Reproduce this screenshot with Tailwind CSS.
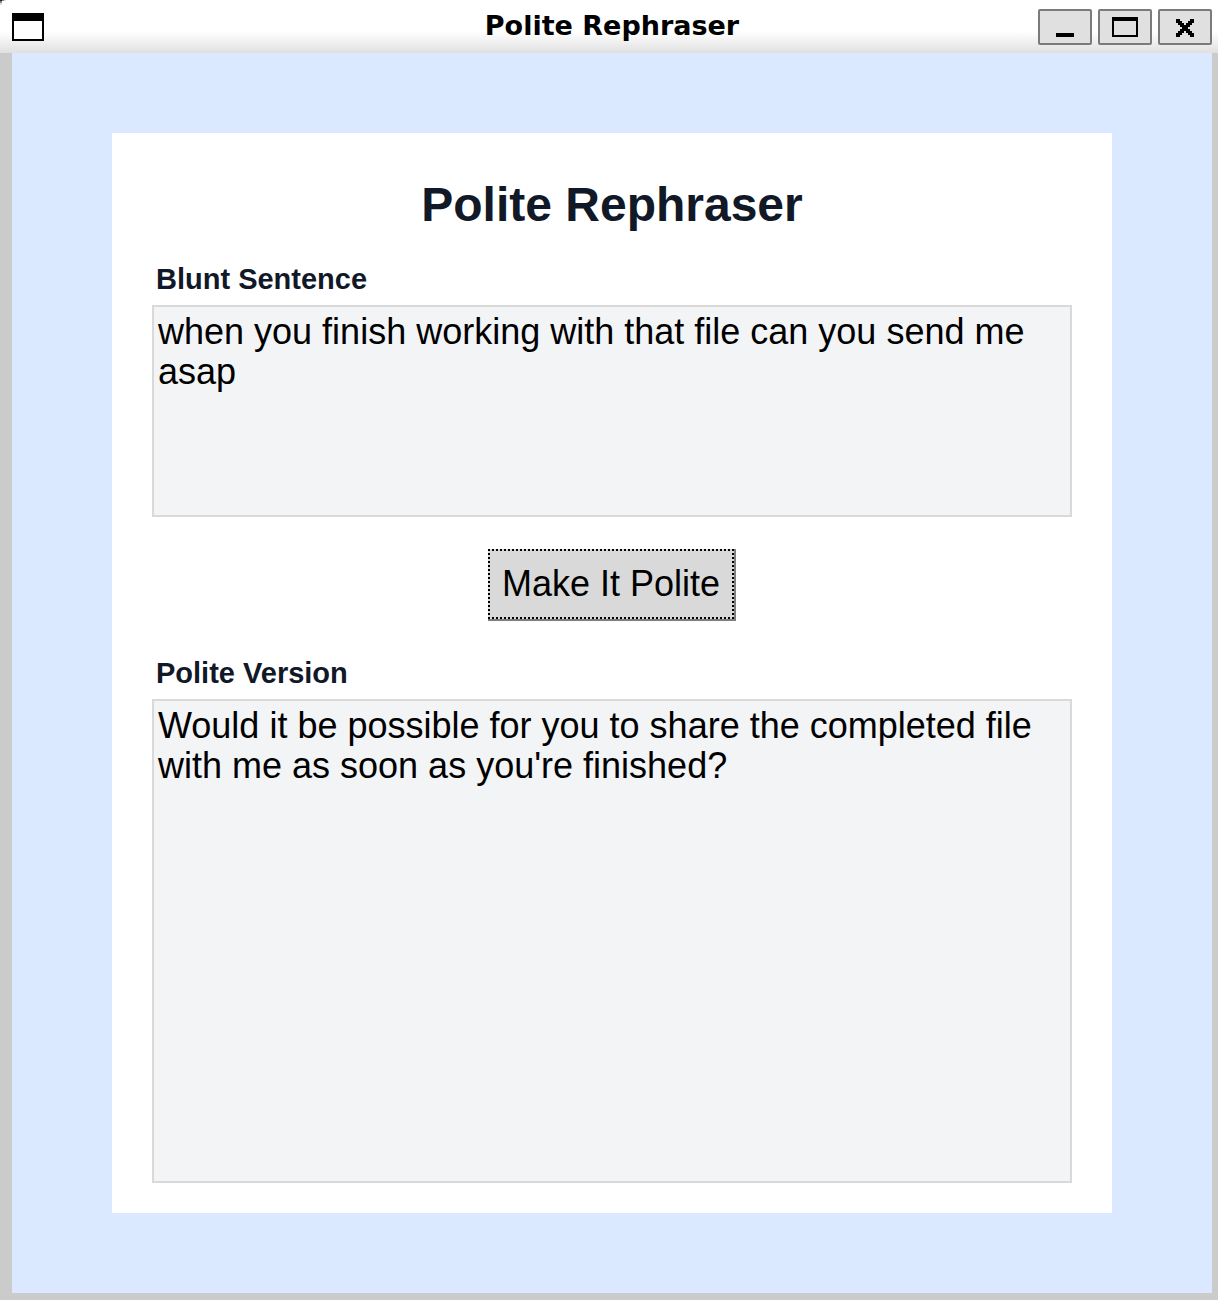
<!DOCTYPE html>
<html lang="en">
<head>
<meta charset="utf-8">
<meta name="viewport" content="width=device-width, initial-scale=1">
<title>Polite Rephraser</title>
<script src="https://cdn.jsdelivr.net/npm/@tailwindcss/browser@4"></script>
</head>
<body class="flex min-h-screen flex-col bg-[#cbcbcb] font-['Liberation_Sans',sans-serif]">
  <!-- Title bar -->
  <header class="relative grid h-[53px] grid-cols-[1fr_auto_1fr] items-center bg-linear-to-b from-white from-60% to-[#e0e0e0] pr-[6px] pl-3">
    <!-- Rounded window corner -->
    <svg class="absolute top-0 left-0 h-[5px] w-[6px]" viewBox="0 0 6 5" shape-rendering="crispEdges" aria-hidden="true"><path fill="#222" d="M0 0h2v1H0z"/><path fill="#888" d="M2 0h2v1H2zM0 1h2v2H0z"/><path fill="#ddd" d="M4 0h2v1H4zM0 3h2v2H0z"/></svg>
    <svg class="h-7 w-8" viewBox="0 0 32 28" shape-rendering="crispEdges" aria-hidden="true"><path d="M0 0h32v28H0z"/><path fill="#fff" d="M2 8h28v18H2z"/></svg>
    <div class="pb-[2px] font-['DejaVu_Sans',sans-serif] text-[27px] leading-8 font-bold text-black">Polite Rephraser</div>
    <div class="flex justify-end gap-[6px]">
      <button type="button" aria-label="Minimize" class="h-9 w-[54px] rounded-[2px] border-2 border-[#7b7b7b] bg-[#e0e0e0]">
        <svg class="block h-8 w-[50px]" viewBox="0 0 50 32" shape-rendering="crispEdges"><path d="M16 22h18v4H16z"/></svg>
      </button>
      <button type="button" aria-label="Maximize" class="h-9 w-[54px] rounded-[2px] border-2 border-[#7b7b7b] bg-[#e0e0e0]">
        <svg class="block h-8 w-[50px]" viewBox="0 0 50 32" shape-rendering="crispEdges"><path fill-rule="evenodd" d="M12 6h26v20H12zM14 10v14h22V10z"/></svg>
      </button>
      <button type="button" aria-label="Close" class="h-9 w-[54px] rounded-[2px] border-2 border-[#7b7b7b] bg-[#e0e0e0]">
        <svg class="block h-8 w-[50px]" viewBox="0 0 50 32" shape-rendering="crispEdges"><path d="M16 8h4v2h2v2h2v2h2v-2h2v-2h2V8h4v4h-2v2h-2v2h-2v2h2v2h2v2h2v4h-4v-2h-2v-2h-2v-2h-2v2h-2v2h-2v2h-4v-4h2v-2h2v-2h2v-2h-2v-2h-2v-2h-2z"/></svg>
      </button>
    </div>
  </header>

  <main class="mr-[6px] mb-[7px] ml-3 flex flex-1 flex-col bg-[#dae9ff] px-[100px] py-20">
    <form class="flex flex-1 flex-col bg-white px-10 pt-10 pb-[30px]">
      <h1 class="text-center text-[48px] leading-[64px] font-bold text-[#111827]">Polite Rephraser</h1>
      <label for="blunt" class="mt-6 px-1 text-[29px] leading-9 font-bold text-[#111827]">Blunt Sentence</label>
      <textarea id="blunt" class="mt-2 h-[212px] resize-none border-2 border-[#d9d9d9] bg-[#f3f4f6] px-1 py-[5px] text-[36px] leading-10 text-black outline-none">when you finish working with that file can you send me asap</textarea>
      <button type="button" class="mt-8 h-[72px] self-center border-r-2 border-b-2 border-[#7f7f7f] bg-[#d9d9d9] text-[36px] leading-10 text-black">
        <span class="flex h-full items-center bg-[repeating-linear-gradient(90deg,#000_0_2px,transparent_2px_4px),repeating-linear-gradient(90deg,#000_0_2px,transparent_2px_4px),repeating-linear-gradient(#000_0_2px,transparent_2px_4px),repeating-linear-gradient(#000_0_2px,transparent_2px_4px)] bg-[position:top,bottom,left,right] bg-[size:100%_2px,100%_2px,2px_100%,2px_100%] bg-no-repeat px-[14px]">Make It Polite</span>
      </button>
      <label for="polite" class="mt-[34px] px-1 text-[29px] leading-9 font-bold text-[#111827]">Polite Version</label>
      <textarea id="polite" class="mt-2 min-h-[212px] flex-1 resize-none border-2 border-[#d9d9d9] bg-[#f3f4f6] px-1 py-[5px] text-[36px] leading-10 text-black outline-none">Would it be possible for you to share the completed file with me as soon as you're finished?</textarea>
    </form>
  </main>
</body>
</html>
